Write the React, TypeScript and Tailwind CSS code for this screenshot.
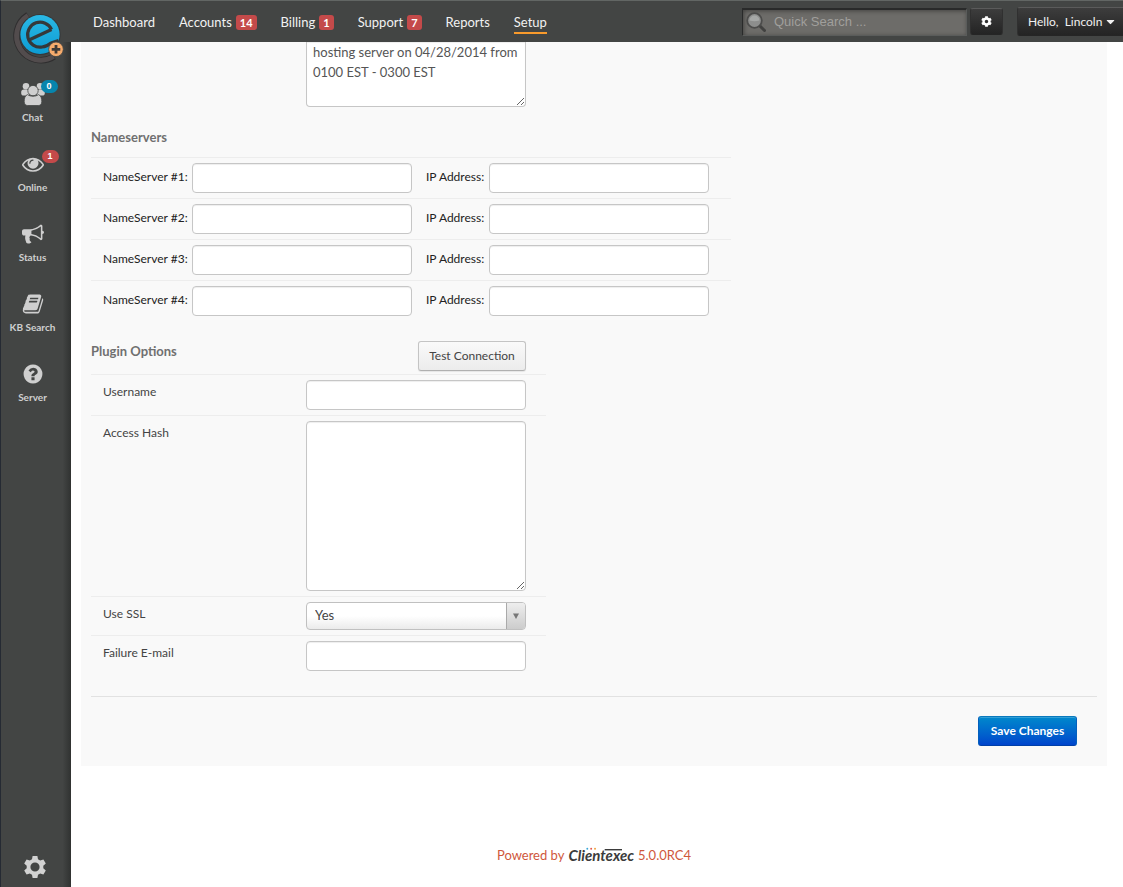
import type { ReactNode } from "react";
import { FaCog, FaCaretDown } from "react-icons/fa";

const icons = {
  online:
    "M1664 960q-152-236-381-353 61 104 61 225 0 185-131.5 316.5t-316.5 131.5-316.5-131.5-131.5-316.5q0-121 61-225-229 117-381 353 133 205 333.5 326.5t434.5 121.5 434.5-121.5 333.5-326.5zm-720-384q0-20-14-34t-34-14q-125 0-214.5 89.5t-89.5 214.5q0 20 14 34t34 14 34-14 14-34q0-86 61-147t147-61q20 0 34-14t14-34zm848 384q0 34-20 69-140 230-376.5 368.5t-499.5 138.5-499.5-139-376.5-368q-20-35-20-69t20-69q140-229 376.5-368t499.5-139 499.5 139 376.5 368q20 35 20 69z",
  status:
    "M1664 640q53 0 90.5 37.5t37.5 90.5-37.5 90.5-90.5 37.5v384q0 52-38 90t-90 38q-417-347-812-380-58 19-91 66t-31 100.5 40 92.5q-20 33-23 65.5t6 58 33.5 55 48 50 61.5 50.5q-29 58-111.5 83t-168.5 11.5-132-55.5q-7-23-29.5-87.5t-32-94.5-23-89-15-101 3.5-98.5 22-110.5h-122q-66 0-113-47t-47-113v-192q0-66 47-113t113-47h480q435 0 896-384 52 0 90 38t38 90v384zm-128 604v-954q-394 302-768 343v270q377 42 768 341z",
  kb: "M1703 478q40 57 18 129l-275 906q-19 64-76.5 107.5t-122.5 43.5h-923q-77 0-148.5-53.5t-99.5-131.5q-24-67-2-127 0-4 3-27t4-37q1-8-3-21.5t-3-19.5q2-11 8-21t16.5-23.5 16.5-23.5q23-38 45-91.5t30-91.5q3-10 .5-30t-.5-28q3-11 17-28t17-23q21-36 42-92t25-90q1-9-2.5-32t.5-28q4-13 22-30.5t22-22.5q19-26 42.5-84.5t27.5-96.5q1-8-3-25.5t-2-26.5q2-8 9-18t18-23 17-21q8-12 16.5-30.5t15-35 16-36 19.5-32 26.5-23.5 36-11.5 47.5 5.5l-1 3q38-9 51-9h761q74 0 114 56t18 130l-274 906q-36 119-71.5 153.5t-128.5 34.5h-869q-27 0-38 15-11 16-1 43 24 70 144 70h923q29 0 56-15.5t35-41.5l300-987q7-22 5-57 38 15 59 43zm-1064 2q-4 13 2 22.5t20 9.5h608q13 0 25.5-9.5t16.5-22.5l21-64q4-13-2-22.5t-20-9.5h-608q-13 0-25.5 9.5t-16.5 22.5zm-83 256q-4 13 2 22.5t20 9.5h608q13 0 25.5-9.5t16.5-22.5l21-64q4-13-2-22.5t-20-9.5h-608q-13 0-25.5 9.5t-16.5 22.5z",
  server:
    "M1024 1376v-192q0-14-9-23t-23-9h-192q-14 0-23 9t-9 23v192q0 14 9 23t23 9h192q14 0 23-9t9-23zm256-672q0-88-55.5-163t-138.5-116-170-41q-243 0-371 213-15 24 8 42l132 100q7 6 19 6 16 0 25-12 53-68 86-92 34-24 86-24 48 0 85.5 26t37.5 59q0 38-20 61t-68 45q-63 28-115.5 86.5t-52.5 125.5v36q0 14 9 23t23 9h192q14 0 23-9t9-23q0-19 21.5-49.5t54.5-49.5q32-18 49-28.5t46-35 44.5-48 28-60.5 12.5-81zm384 192q0 209-103 385.5t-279.5 279.5-385.5 103-385.5-103-279.5-279.5-103-385.5 103-385.5 279.5-279.5 385.5-103 385.5 103 279.5 279.5 103 385.5z",
};

function Glyph({ d }: { d: string }) {
  return (
    <svg viewBox="0 0 1792 1792" className="size-[22px]" fill="currentColor" aria-hidden="true">
      <path d={d} />
    </svg>
  );
}

function GroupIcon() {
  return (
    <svg viewBox="0 0 24 24" className="size-6" fill="currentColor" aria-hidden="true">
      <circle cx="5" cy="4.2" r="3.3" />
      <circle cx="19" cy="4.2" r="3.3" />
      <rect x="0.2" y="7.4" width="8" height="6.2" rx="2.6" />
      <rect x="15.8" y="7.4" width="8" height="6.2" rx="2.6" />
      <g stroke="#434544" strokeWidth="0.800">
        <circle cx="12" cy="8.6" r="5.2" />
        <path d="M6.5 12.6C4 13.5 3.2 16.500 3.200 19.500C3.200 22 4.400 23.500 6.600 23.500H17.400C19.600 23.500 20.800 22 20.800 19.500C20.800 16.500 20 13.500 17.500 12.600C14.500 14.800 9.500 14.800 6.500 12.600Z" />
      </g>
    </svg>
  );
}

function SettingsGear() {
  return (
    <svg viewBox="0 0 24 24" className="size-6" fill="currentColor" aria-hidden="true">
      <path
        fillRule="evenodd"
        d="M9.600 1H14.400L15 4.300L17.200 5.600L20.400 4.400L22.800 8.600L20.300 10.700V13.300L22.800 15.400L20.400 19.600L17.200 18.400L15 19.700L14.400 23H9.600L9 19.700L6.800 18.400L3.600 19.600L1.200 15.400L3.700 13.300V10.700L1.200 8.600L3.600 4.400L6.800 5.600L9 4.300ZM12 7.400A4.600 4.600 0 1 0 12 16.600A4.600 4.600 0 1 0 12 7.400Z"
      />
    </svg>
  );
}

function Logo() {
  return (
    <svg viewBox="0 0 54 56" className="h-14 w-[54px]" role="img" aria-label="Clientexec">
      <defs>
        <linearGradient id="logo-blue" gradientUnits="userSpaceOnUse" x1="0" y1="5" x2="0" y2="46">
          <stop offset="0" stopColor="#2bb9e6" />
          <stop offset="1" stopColor="#0c9bd2" />
        </linearGradient>
      </defs>
      <g fill="none">
        <path d="M16 6A23.500 23.500 0 1 0 42 47.500" stroke="#2f2e2f" strokeWidth="6.500" />
        <path d="M16 6.500A23.500 23.500 0 1 0 41.500 47.500" stroke="#524c4d" strokeWidth="5" />
      </g>
      <circle cx="28" cy="25.500" r="20.600" fill="#35383a" />
      <circle cx="28" cy="25.500" r="19.600" fill="url(#logo-blue)" />
      <g fill="none" stroke="#35383a" strokeWidth="3.200" strokeLinejoin="round">
        <path d="M39.500 20.500A12.500 12.500 0 1 0 30 38Q35 37.500 39 34L46.500 31.500" />
        <path d="M17 31L39.500 20.500" />
      </g>
      <circle cx="44" cy="40.300" r="7.300" fill="#f6ab6c" stroke="#434544" strokeWidth="0.800" />
      <path d="M44 36V44.600M39.700 40.300H48.300" stroke="#403b37" strokeWidth="2.800" />
    </svg>
  );
}

function SideItem({ label, icon, badge, badgeClass }: { label: string; icon: ReactNode; badge?: string; badgeClass?: string }) {
  return (
    <a href="#" className="flex h-[70px] flex-col items-center text-[#cfcfcf]">
      <span className="relative flex h-[31px] items-center justify-center">
        {icon}
        {badge && (
          <span className={"absolute top-0.5 left-5 w-[17px] rounded-full text-center font-['Liberation_Sans',sans-serif] text-[9px] leading-[13px] font-bold text-white " + badgeClass}>
            {badge}
          </span>
        )}
      </span>
      <span className="text-[10px] leading-4 font-bold whitespace-nowrap">{label}</span>
    </a>
  );
}

function NavItem({ label, count, active }: { label: string; count?: string; active?: boolean }) {
  return (
    <a href="#" className="flex items-center gap-1 text-[13px] leading-5 text-[#f2f2f2]">
      <span className={active ? "border-b-2 border-[#f89a2c]" : "border-b-2 border-transparent"}>{label}</span>
      {count && (
        <span className="rounded-[3px] bg-[#c44a4a] px-1 text-[11px] leading-[15px] font-bold text-white">{count}</span>
      )}
    </a>
  );
}

const field =
  "w-[220px] rounded-[4px] border border-[#c6c6c6] bg-white px-1.5 text-[13px] text-[#555] shadow-[inset_0_1px_1px_rgba(0,0,0,0.07)] outline-none";

function OptionRow({ id, label, children }: { id: string; label: string; children: ReactNode }) {
  return (
    <div className="flex items-start border-t border-[#ededed] py-[5px] pl-3">
      <label htmlFor={id} className="w-[203px] pt-0.5 text-[12px] leading-5 text-[#444]">
        {label}
      </label>
      {children}
    </div>
  );
}

export default function App() {
  return (
    <div className="flex min-h-screen bg-white font-['Lato','Liberation_Sans',sans-serif]">
      <aside className="flex w-[71px] shrink-0 flex-col border-t border-l border-t-[#626664] border-l-[#252a33] bg-[#434544]">
        <div className="h-[41px] pt-2 pl-[11px]">
          <Logo />
        </div>
        <div className="flex grow flex-col bg-linear-to-l from-[#303231] to-transparent to-12% pt-9 pr-[7px]">
          <nav aria-label="Tools">
            <SideItem label="Chat" icon={<GroupIcon />} badge="0" badgeClass="bg-[#0785ad]" />
            <SideItem label="Online" icon={<Glyph d={icons.online} />} badge="1" badgeClass="bg-[#c44a4a]" />
            <SideItem label="Status" icon={<Glyph d={icons.status} />} />
            <SideItem label="KB Search" icon={<Glyph d={icons.kb} />} />
            <SideItem label="Server" icon={<Glyph d={icons.server} />} />
          </nav>
          <button type="button" aria-label="Settings" className="mt-auto mb-2 ml-1 self-center text-[#d2d2d2]">
            <SettingsGear />
          </button>
        </div>
      </aside>

      <div className="flex min-w-0 grow flex-col">
        <header className="flex h-[42px] items-center overflow-hidden border-t border-[#626664] bg-[#434544] pl-[22px]">
          <nav aria-label="Main" className="flex items-center gap-6 pt-0.5">
            <NavItem label="Dashboard" />
            <NavItem label="Accounts" count="14" />
            <NavItem label="Billing" count="1" />
            <NavItem label="Support" count="7" />
            <NavItem label="Reports" />
            <NavItem label="Setup" active />
          </nav>
          <div className="ml-auto flex shrink-0 items-center">
            <label className="flex h-7 w-[225px] items-center gap-2 border border-t-2 border-[#5a5c5b] border-t-[#292a2a] border-l-[#292a2a] bg-[#6d6c69] pl-[3px] shadow-[inset_1px_1px_4px_rgba(0,0,0,0.4)]">
              <svg viewBox="0 0 20 20" className="size-5 shrink-0" aria-hidden="true">
                <path d="M13 13L18.500 18.500" stroke="#414140" strokeWidth="3" strokeLinecap="round" />
                <circle cx="8.500" cy="8.500" r="7.300" fill="#8d8e8d" stroke="#4c4c4b" strokeWidth="1.800" />
                <path d="M3.500 8.500A5 5 0 0 1 13.500 8.500Q8.500 10 3.500 8.500Z" fill="#a5a7a6" />
              </svg>
              <input
                type="text"
                aria-label="Quick Search"
                placeholder="Quick Search ..."
                className="w-full min-w-0 bg-transparent font-['Liberation_Sans',sans-serif] text-[13px] text-white outline-none placeholder:text-[#a09f9c]"
              />
            </label>
            <button type="button" aria-label="Options" className="ml-[3px] flex h-[27px] w-[33px] items-center justify-center rounded-[3px] border border-t-[#5b5b5b] border-r-[#303030] border-b-[#252525] border-l-[#303030] bg-linear-to-b from-[#3d3d3d] to-[#242424] text-white">
              <FaCog className="size-[11px]" />
            </button>
            <button type="button" className="ml-[14px] flex h-[29px] w-[106px] items-center gap-0.5 rounded-l-[3px] border border-r-0 border-t-[#5b5b5b] border-b-[#252525] border-l-[#303030] bg-linear-to-b from-[#3d3d3d] to-[#242424] pl-[10px] text-[12px] whitespace-nowrap text-[#f0f0f0]">
              Hello, &nbsp;Lincoln
              <FaCaretDown className="size-[13px]" />
            </button>
          </div>
        </header>

        <main className="mr-4 ml-[10px] bg-[#f9f9f9] px-[10px] pb-5">
          <div className="flex pl-[215px]">
            <textarea
              aria-label="Status message"
              defaultValue={"hosting server on 04/28/2014 from 0100 EST - 0300 EST"}
              className={field + " h-[65px] rounded-t-none border-t-0 py-0 leading-5 text-[#444]"}
            />
          </div>

          <section className="w-[640px] max-w-full pt-5">
            <h2 className="pb-[10px] text-[13px] leading-5 font-bold text-[#707070]">Nameservers</h2>
            {[1, 2, 3, 4].map((n) => (
              <div key={n} className="flex items-center border-t border-[#ededed] py-[5px] pl-3 text-[12px] text-[#222]">
                <label htmlFor={`ns-${n}`} className="w-[89px] pb-0.5 whitespace-nowrap">
                  NameServer #{n}:
                </label>
                <input id={`ns-${n}`} type="text" className={field + " h-[30px]"} />
                <label htmlFor={`ip-${n}`} className="ml-[14px] w-[63px] pb-0.5 whitespace-nowrap">
                  IP Address:
                </label>
                <input id={`ip-${n}`} type="text" className={field + " h-[30px]"} />
              </div>
            ))}
          </section>

          <section className="w-[455px] max-w-full pt-5">
            <div className="flex items-start justify-between pr-5 pb-[3px]">
              <h2 className="text-[13px] leading-5 font-bold text-[#707070]">Plugin Options</h2>
              <button type="button" className="h-[30px] w-[108px] rounded-[3px] border border-[#c4c4c4] border-b-[#b0b0b0] bg-linear-to-b from-[#fafafa] to-[#ececec] text-[12px] text-[#444] shadow-[0_1px_1px_rgba(0,0,0,0.08)]">
                Test Connection
              </button>
            </div>
            <OptionRow id="username" label="Username">
              <input id="username" type="text" className={field + " h-[30px]"} />
            </OptionRow>
            <OptionRow id="hash" label="Access Hash">
              <textarea id="hash" className={field + " h-[170px]"} />
            </OptionRow>
            <OptionRow id="ssl" label="Use SSL">
              <div className="relative">
                <select
                  id="ssl"
                  defaultValue="Yes"
                  className="block h-7 w-[220px] appearance-none rounded-[4px] border border-[#c0c0c0] bg-linear-to-t from-[#ebebeb] to-white to-50% pl-2 text-[13px] text-[#444] outline-none"
                >
                  <option>Yes</option>
                  <option>No</option>
                </select>
                <span className="pointer-events-none absolute inset-y-px right-px flex w-[19px] items-center justify-center rounded-r-[3px] border-l border-[#aaa] bg-linear-to-b from-[#eee] to-[#ccc]">
                  <svg viewBox="0 0 6 6" className="size-1.5" aria-hidden="true">
                    <path d="M0 0.500H6L3 6Z" fill="#777" />
                  </svg>
                </span>
              </div>
            </OptionRow>
            <OptionRow id="failure" label="Failure E-mail">
              <input id="failure" type="email" className={field + " h-[30px]"} />
            </OptionRow>
          </section>

          <div className="mt-5 flex justify-end border-t border-[#e2e2e2] pt-[19px] pr-5">
            <button type="button" className="h-[30px] w-[99px] rounded-[3px] border border-t-[#0a79bd] border-r-[#0460bd] border-b-[#0040a8] border-l-[#0460bd] bg-linear-to-b from-[#0088cc] to-[#0044cc] text-[12px] font-bold text-white shadow-[inset_0_1px_0_rgba(255,255,255,0.2)]">
              Save Changes
            </button>
          </div>
        </main>

        <footer className="mr-4 ml-[10px] flex items-center justify-center gap-1 pt-[79px] text-[13px] leading-5 text-[#cf573c]">
          Powered by
          <a href="#" className="relative text-[15px] leading-5 font-bold text-[#3b3b3b] italic">
            Clientexec
            <svg viewBox="0 0 68 20" className="absolute inset-0 h-full w-full" aria-hidden="true">
              <path d="M38 4.500H56" stroke="#3b3b3b" strokeWidth="1.500" />
              <circle cx="20" cy="3.500" r="1" fill="#3ba7d8" />
              <circle cx="24" cy="3.500" r="1" fill="#e2574c" />
              <circle cx="28" cy="3.500" r="1" fill="#f0a23a" />
            </svg>
          </a>
          5.0.0RC4
        </footer>
      </div>
    </div>
  );
}
